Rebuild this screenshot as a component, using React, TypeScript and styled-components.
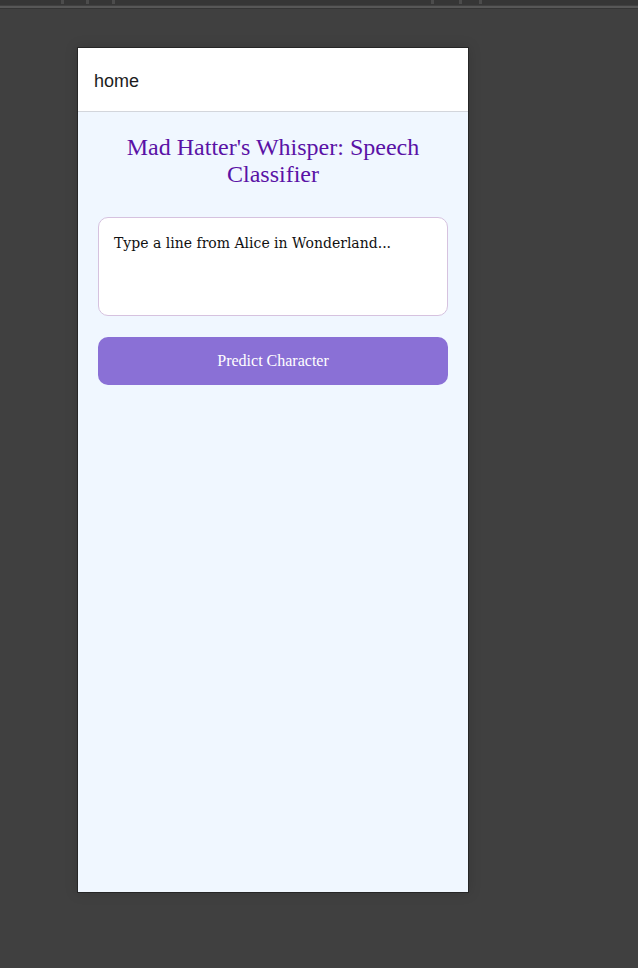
import styled, { createGlobalStyle } from 'styled-components';

const GlobalStyle = createGlobalStyle`
    html, body {
        margin: 0;
        padding: 0;
        background-color: #404040;
    }
`;

const Page = styled.div`
    width: 638px;
    height: 968px;
    background-color: #404040;
    overflow: hidden;
`;

const TopStrip = styled.div`
    height: 5px;
    background-color: #363636;
    display: flex;
`;

const Tick = styled.span<{ $left: number }>`
    width: 3px;
    height: 4px;
    margin-left: ${props => props.$left}px;
    background-color: #4c4c4c;
`;

const Rule = styled.div`
    height: 2px;
    margin-top: 1px;
    background-color: #575757;
    border-bottom: 1px solid #353535;
`;

const Stage = styled.div`
    padding: 38px 0 0 77px;
`;

const Phone = styled.div`
    box-sizing: border-box;
    width: 392px;
    height: 846px;
    border: 1px solid #262626;
    background-color: #f0f7ff;
    display: flex;
    flex-direction: column;
    box-shadow: 0 0 12px rgba(0, 0, 0, 0.15);
`;

const Header = styled.div`
    box-sizing: border-box;
    height: 64px;
    padding: 3px 16px 0;
    background-color: #ffffff;
    border-bottom: 1px solid #d3d6dc;
    display: flex;
    align-items: center;
    font-family: 'Liberation Sans', Arial, sans-serif;
    font-size: 18px;
    color: #1c1c1c;
`;

const Content = styled.div`
    padding: 22px 20px;
    display: flex;
    flex-direction: column;
`;

const Title = styled.h1`
    margin: 0 0 29px;
    font-family: 'Liberation Serif', 'Times New Roman', serif;
    font-weight: normal;
    font-size: 24px;
    line-height: 27px;
    text-align: center;
    color: #5a12a6;
`;

const LineInput = styled.textarea`
    box-sizing: border-box;
    height: 99px;
    padding: 14px 15px;
    border: 1px solid #d6c2df;
    border-radius: 10px;
    background-color: #ffffff;
    resize: none;
    font-family: 'DejaVu Serif', Georgia, serif;
    font-size: 14px;
    line-height: 22px;
    color: #111111;
    outline: none;

    &::placeholder {
        color: #111111;
    }
`;

const PredictButton = styled.button`
    margin-top: 21px;
    height: 48px;
    border: none;
    border-radius: 10px;
    background-color: #8a70d6;
    color: #ffffff;
    font-family: 'Liberation Serif', 'Times New Roman', serif;
    font-size: 16px;
    cursor: pointer;
`;

const ticks = [61, 22, 23, 316, 25, 17];

const App = () => {
    return (
        <Page>
            <GlobalStyle />
            <TopStrip>
                {ticks.map((left, i) => (
                    <Tick key={i} $left={left} />
                ))}
            </TopStrip>
            <Rule />
            <Stage>
                <Phone>
                    <Header>home</Header>
                    <Content>
                        <Title>Mad Hatter's Whisper: Speech Classifier</Title>
                        <LineInput placeholder="Type a line from Alice in Wonderland..." />
                        <PredictButton>Predict Character</PredictButton>
                    </Content>
                </Phone>
            </Stage>
        </Page>
    );
};

export default App;
